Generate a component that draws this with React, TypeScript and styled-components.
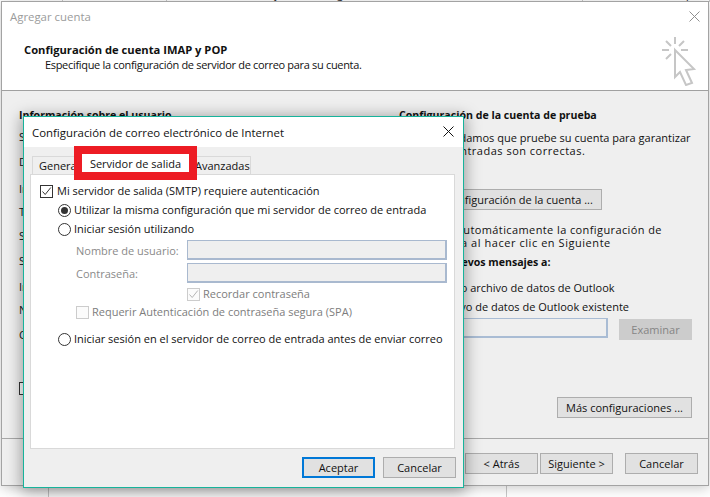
import styled, { createGlobalStyle } from "styled-components";

const GlobalStyle = createGlobalStyle`
  html, body {
    margin: 0;
    padding: 0;
    background: #fff;
  }
  * {
    box-sizing: border-box;
  }
`;

const Desktop = styled.div`
  position: relative;
  width: 710px;
  height: 497px;
  overflow: hidden;
  display: flex;
  flex-direction: column;
  justify-content: space-between;
  background: #fff;
  font-family: "Open Sans", "Liberation Sans", sans-serif;
  font-size: 11px;
  color: #111;
`;

const BackRow = styled.div<{ $h: number }>`
  display: flex;
  height: ${(p) => p.$h}px;
  overflow: hidden;
`;

const BackCell = styled.div<{ $w: number; $pad?: number }>`
  width: ${(p) => p.$w}px;
  padding-left: ${(p) => p.$pad ?? 0}px;
  border-right: 1px solid #c8c8c8;
  white-space: nowrap;
  line-height: 16px;
  margin-top: -14px;
  height: 40px;
`;

const Window = styled.div`
  position: absolute;
  left: 1px;
  top: 1px;
  width: 708px;
  height: 485px;
  display: flex;
  flex-direction: column;
  background: #efefef;
  border: 1px solid #a3a3a3;
  box-shadow: 0 2px 12px rgba(0, 0, 0, 0.22);
`;

const Header = styled.div`
  height: 89px;
  flex: none;
  display: flex;
  justify-content: space-between;
  background: #fff;
  border-bottom: 1px solid #a0a0a0;
`;

const HeaderText = styled.div`
  display: flex;
  flex-direction: column;
`;

const WindowTitle = styled.div`
  margin: 7px 0 0 8px;
  line-height: 16px;
  font-size: 11.4px;
  color: #9b9b9b;
`;

const Heading = styled.div`
  margin: 17px 0 0 22px;
  line-height: 16px;
  font-weight: 700;
  font-size: 11.2px;
`;

const Subheading = styled.div`
  margin-left: 43px;
  line-height: 14px;
  letter-spacing: -0.32px;
`;

const HeaderIcons = styled.div`
  width: 50px;
  display: flex;
  flex-direction: column;
  align-items: flex-end;
  padding-right: 8px;
`;

const CloseIcon = styled.svg<{ $dark?: boolean }>`
  display: block;
  width: 11px;
  height: 11px;
  stroke: ${(p) => (p.$dark ? "#111" : "#8f8f8f")};
  stroke-width: 1;
  fill: none;
`;

const HeaderClose = styled(CloseIcon)`
  margin-top: 9px;
`;

const DialogClose = styled(CloseIcon)`
  margin-top: -1px;
`;

const ClickIcon = styled.svg`
  display: block;
  width: 38px;
  height: 50px;
  margin: 14px 1px 0 0;
  fill: none;
  stroke: #c6c6c6;
  stroke-width: 2;
`;

const Body = styled.div`
  height: 348px;
  flex: none;
  display: flex;
  border-bottom: 1px solid #a8a8a8;
`;

const LeftColumn = styled.div`
  width: 397px;
  padding-left: 17px;
  display: flex;
  flex-direction: column;
`;

const RightColumn = styled.div`
  width: 293px;
  display: flex;
  flex-direction: column;
  align-items: flex-start;
`;

const Line = styled.div<{ $top?: number; $bold?: boolean }>`
  margin-top: ${(p) => p.$top ?? 0}px;
  line-height: 16px;
  height: 16px;
  white-space: nowrap;
  font-weight: ${(p) => (p.$bold ? 700 : 400)};
  font-size: ${(p) => (p.$bold ? "10.6px" : "11px")};
`;

const Para = styled.div<{ $top: number }>`
  margin-top: ${(p) => p.$top}px;
  line-height: 13px;
  white-space: nowrap;
`;

const ParaTail = styled.span`
  display: block;
  margin-left: 11px;
  letter-spacing: 0.5px;
`;

const CheckPara = styled.div`
  margin-top: 13px;
  display: flex;
  gap: 4px;
  line-height: 13px;
  white-space: nowrap;
  letter-spacing: 0.4px;
`;

const CheckParaTail = styled.span`
  display: block;
  letter-spacing: 0.55px;
`;

const BackRadioLine = styled.div<{ $top: number }>`
  margin: ${(p) => p.$top}px 0 0 19px;
  display: flex;
  align-items: center;
  gap: 3px;
  line-height: 16px;
  height: 16px;
  white-space: nowrap;
`;

const Button = styled.button<{ $w: number; $default?: boolean; $off?: boolean }>`
  flex: none;
  width: ${(p) => p.$w}px;
  height: 21px;
  padding: 0;
  font: inherit;
  line-height: 17px;
  white-space: nowrap;
  color: ${(p) => (p.$off ? "#858585" : "#111")};
  background: ${(p) => (p.$off ? "#cccccc" : "#e1e1e1")};
  border: ${(p) =>
    p.$default
      ? "2px solid #0078d7"
      : p.$off
        ? "1px solid #cccccc"
        : "1px solid #adadad"};
`;

const TestButton = styled(Button)`
  margin-top: 32px;
`;

const BrowseRow = styled.div`
  margin-top: 3px;
  align-self: stretch;
  display: flex;
  align-items: flex-start;
  gap: 11px;
`;

const BrowseButton = styled(Button)`
  margin-top: 1px;
`;

const PathInput = styled.div`
  margin-left: 21px;
  width: 189px;
  height: 20px;
  background: #efefef;
  border: 1px solid #a9bcd4;
  border-width: 1px 2px 2px 1px;
`;

const MoreButton = styled(Button)`
  margin: 57px 0 0 158px;
`;

const Footer = styled.div`
  flex: 1;
  display: flex;
  justify-content: flex-end;
  padding: 14px 10px 0 0;
`;

const FooterButton = styled(Button)<{ $gap: number }>`
  margin-left: ${(p) => p.$gap}px;
`;

const Dialog = styled.div`
  position: absolute;
  left: 23px;
  top: 116px;
  width: 441px;
  height: 372px;
  display: flex;
  flex-direction: column;
  background: #efefef;
  border: 1px solid #17b39b;
  box-shadow: 0 2px 14px 2px rgba(0, 0, 0, 0.34);
`;

const DialogBar = styled.div`
  height: 30px;
  flex: none;
  display: flex;
  align-items: center;
  justify-content: space-between;
  padding: 0 9px 0 8px;
  background: #fff;
  font-size: 11.4px;
`;

const TabRow = styled.div`
  height: 27px;
  flex: none;
  display: flex;
  align-items: flex-start;
  padding-left: 8px;
  position: relative;
  z-index: 1;
`;

const Tab = styled.div<{ $w: number; $active?: boolean }>`
  flex: none;
  width: ${(p) => p.$w}px;
  white-space: nowrap;
  ${(p) =>
    p.$active
      ? `
    height: 34px;
    margin: -1px -10px 0 -8px;
    position: relative;
    z-index: 1;
    background: #fff;
    border: 8px solid #ed1c24;
    line-height: 20px;
    text-align: center;
  `
      : `
    height: 18px;
    margin-top: 9px;
    background: #efefef;
    border: 1px solid #d9d9d9;
    border-bottom: 0;
    line-height: 18px;
    padding-left: 6px;
  `}
`;

const AfterTab = styled(Tab)`
  padding-left: 7px;
`;

const Panel = styled.div`
  margin: 0 0 0 6px;
  width: 425px;
  height: 275px;
  flex: none;
  display: flex;
  flex-direction: column;
  padding-left: 9px;
  background: #fff;
  border: 1px solid #d9d9d9;
`;

const OptionRow = styled.div<{ $top: number; $indent?: number; $off?: boolean; $gap?: number }>`
  margin: ${(p) => p.$top}px 0 0 ${(p) => p.$indent ?? 0}px;
  height: 16px;
  display: flex;
  align-items: center;
  gap: ${(p) => p.$gap ?? 3}px;
  line-height: 16px;
  white-space: nowrap;
  color: ${(p) => (p.$off ? "#7d7d7d" : "#111")};
`;

const CheckBox = styled.span<{ $off?: boolean }>`
  flex: none;
  width: 13px;
  height: 13px;
  display: block;
  background: ${(p) => (p.$off ? "#fbfbfb" : "#fff")};
  border: 1px solid ${(p) => (p.$off ? "#cccccc" : "#333")};
`;

const CheckMark = styled.svg<{ $off?: boolean }>`
  display: block;
  width: 11px;
  height: 11px;
  fill: none;
  stroke: ${(p) => (p.$off ? "#b5b5b5" : "#333")};
  stroke-width: 1;
`;

const Radio = styled.span<{ $on?: boolean }>`
  flex: none;
  width: 13px;
  height: 13px;
  display: flex;
  align-items: center;
  justify-content: center;
  background: #fff;
  border: 1px solid #333;
  border-radius: 50%;
  &::after {
    content: "";
    display: ${(p) => (p.$on ? "block" : "none")};
    width: 7px;
    height: 7px;
    border-radius: 50%;
    background: #333;
  }
`;

const FieldRow = styled.div<{ $top: number }>`
  margin: ${(p) => p.$top}px 0 0 36px;
  display: flex;
  align-items: center;
  height: 20px;
  color: #8a8a8a;
`;

const FieldLabel = styled.span`
  width: 111px;
  flex: none;
  white-space: nowrap;
`;

const FieldInput = styled.div`
  width: 260px;
  height: 20px;
  background: #efefef;
  border: 2px solid #a9b9cf;
  border-top-width: 1px;
  border-left-width: 1px;
`;

const DialogFooter = styled.div`
  flex: 1;
  display: flex;
  justify-content: flex-end;
  padding: 8px 7px 0 0;
  gap: 8px;
`;

const Check = ({ off }: { off?: boolean }) => (
  <CheckMark $off={off} viewBox="0 0 11 11">
    <path d="M1.5 5.5 L4.2 8.5 L9.8 1.5" />
  </CheckMark>
);

export default function App() {
  return (
    <Desktop>
      <GlobalStyle />
      <BackRow $h={2}>
        <BackCell $w={63} />
        <BackCell $w={104} $pad={25}>anteriores</BackCell>
        <BackCell $w={416} $pad={95}>adjuntos&nbsp;&nbsp; categorías</BackCell>
        <BackCell $w={127} $pad={6}>recientes&nbsp;&nbsp;&nbsp; de búsqueda</BackCell>
      </BackRow>
      <BackRow $h={11}>
        <BackCell $w={49} />
        <BackCell $w={458} />
      </BackRow>

      <Window>
        <Header>
          <HeaderText>
            <WindowTitle>Agregar cuenta</WindowTitle>
            <Heading>Configuración de cuenta IMAP y POP</Heading>
            <Subheading>Especifique la configuración de servidor de correo para su cuenta.</Subheading>
          </HeaderText>
          <HeaderIcons>
            <HeaderClose viewBox="0 0 11 11">
              <path d="M0.5 0.5 L10.5 10.5 M10.5 0.5 L0.5 10.5" />
            </HeaderClose>
            <ClickIcon viewBox="0 0 38 50">
              <path d="M14 1 V8 M1 14 H8 M20 14 H27 M5 5 L10 10 M23 5 L18 10 M5 23 L10 18" />
              <path d="M14 14 L33 33 L25 34 L31 47 L25 49 L19 36 L14 41 Z" />
            </ClickIcon>
          </HeaderIcons>
        </Header>
        <Body>
          <LeftColumn>
            <Line $top={16} $bold>Información sobre el usuario</Line>
            <Line $top={6}>Su nombre:</Line>
            <Line $top={9}>Dirección de correo electrónico:</Line>
            <Line $top={11}>Información del servidor</Line>
            <Line $top={7}>Tipo de cuenta:</Line>
            <Line $top={8}>Servidor de correo entrante:</Line>
            <Line $top={9}>Servidor de correo saliente (SMTP):</Line>
            <Line $top={10}>Información de inicio de sesión</Line>
            <Line $top={7}>Nombre de usuario:</Line>
            <Line $top={9}>Contraseña:</Line>
            <OptionRow $top={37}>
              <CheckBox />
              Recordar contraseña
            </OptionRow>
          </LeftColumn>
          <RightColumn>
            <Line $top={16} $bold>Configuración de la cuenta de prueba</Line>
            <Para $top={8}>
              Le recomendamos que pruebe su cuenta para garantizar
              <ParaTail>que las entradas son correctas.</ParaTail>
            </Para>
            <TestButton $w={203}>Probar configuración de la cuenta ...</TestButton>
            <CheckPara>
              <CheckBox />
              <span>
                Probar automáticamente la configuración de
                <CheckParaTail>la cuenta al hacer clic en Siguiente</CheckParaTail>
              </span>
            </CheckPara>
            <Line $top={5} $bold>Entregar nuevos mensajes a:</Line>
            <BackRadioLine $top={10}>
              <Radio />
              Nuevo archivo de datos de Outlook
            </BackRadioLine>
            <BackRadioLine $top={3}>
              <Radio $on />
              Archivo de datos de Outlook existente
            </BackRadioLine>
            <BrowseRow>
              <PathInput />
              <BrowseButton $w={73} $off>Examinar</BrowseButton>
            </BrowseRow>
            <MoreButton $w={135}>Más configuraciones ...</MoreButton>
          </RightColumn>
        </Body>
        <Footer>
          <FooterButton $w={73} $gap={0}>&lt; Atrás</FooterButton>
          <FooterButton $w={73} $gap={2}>Siguiente &gt;</FooterButton>
          <FooterButton $w={73} $gap={12}>Cancelar</FooterButton>
        </Footer>
      </Window>

      <Dialog>
        <DialogBar>
          Configuración de correo electrónico de Internet
          <DialogClose $dark viewBox="0 0 11 11">
            <path d="M0.5 0.5 L10.5 10.5 M10.5 0.5 L0.5 10.5" />
          </DialogClose>
        </DialogBar>
        <TabRow>
          <Tab $w={50}>General</Tab>
          <Tab $w={123} $active>Servidor de salida</Tab>
          <AfterTab $w={64}>Avanzadas</AfterTab>
        </TabRow>
        <Panel>
          <OptionRow $top={8} $gap={4}>
            <CheckBox><Check /></CheckBox>
            Mi servidor de salida (SMTP) requiere autenticación
          </OptionRow>
          <OptionRow $top={3} $indent={18}>
            <Radio $on />
            Utilizar la misma configuración que mi servidor de correo de entrada
          </OptionRow>
          <OptionRow $top={3} $indent={18}>
            <Radio />
            Iniciar sesión utilizando
          </OptionRow>
          <FieldRow $top={3}>
            <FieldLabel>Nombre de usuario:</FieldLabel>
            <FieldInput />
          </FieldRow>
          <FieldRow $top={3}>
            <FieldLabel>Contraseña:</FieldLabel>
            <FieldInput />
          </FieldRow>
          <OptionRow $top={3} $indent={147} $off>
            <CheckBox $off><Check off /></CheckBox>
            Recordar contraseña
          </OptionRow>
          <OptionRow $top={2} $indent={36} $off>
            <CheckBox $off />
            Requerir Autenticación de contraseña segura (SPA)
          </OptionRow>
          <OptionRow $top={11} $indent={18}>
            <Radio />
            Iniciar sesión en el servidor de correo de entrada antes de enviar correo
          </OptionRow>
        </Panel>
        <DialogFooter>
          <Button $w={73} $default>Aceptar</Button>
          <Button $w={73}>Cancelar</Button>
        </DialogFooter>
      </Dialog>
    </Desktop>
  );
}
